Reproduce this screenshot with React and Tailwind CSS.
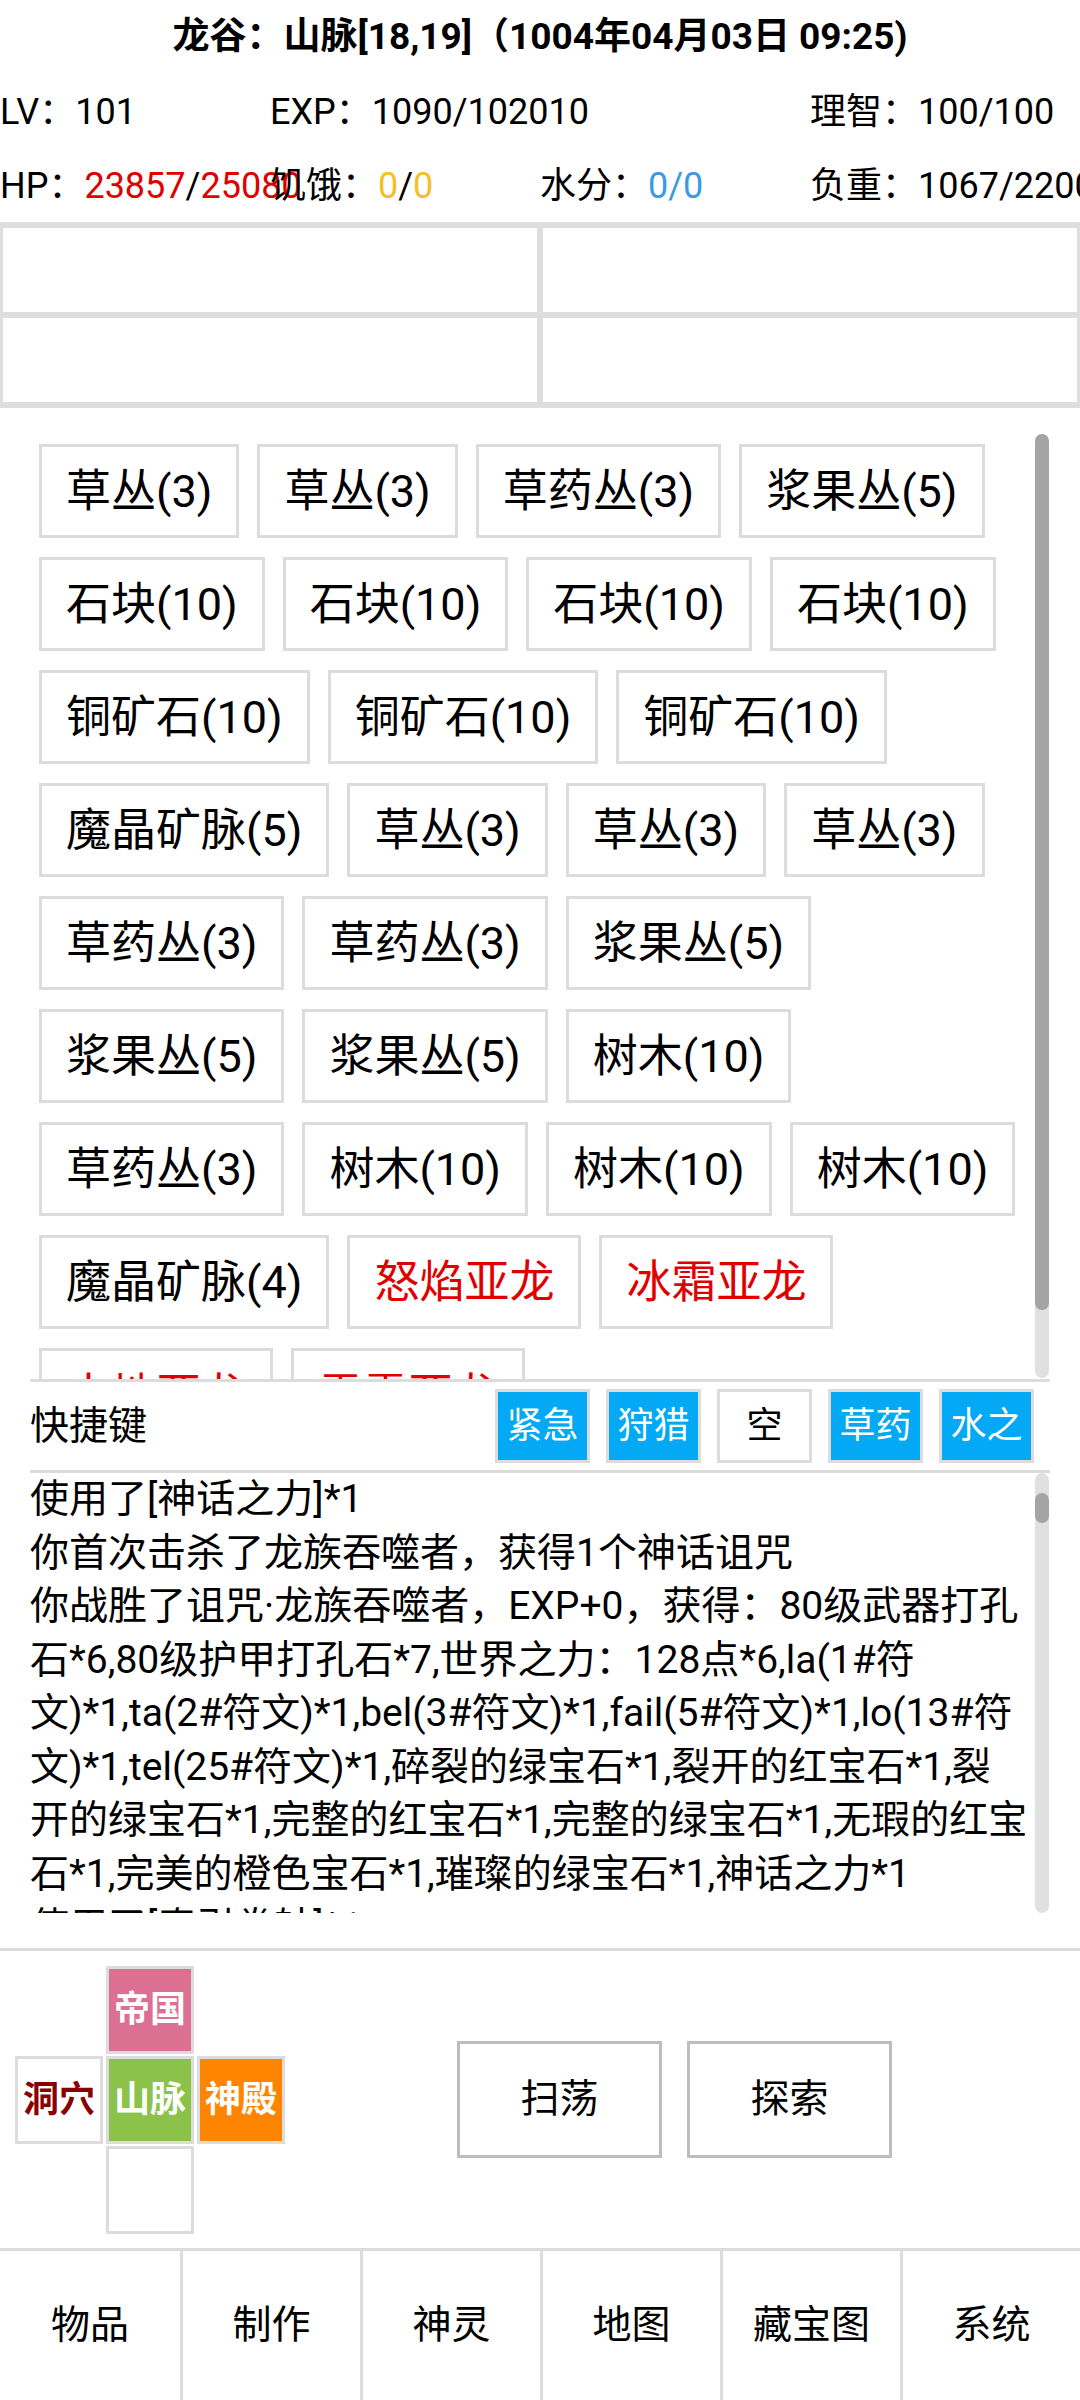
const itemRows = [
  ['草丛(3)', '草丛(3)', '草药丛(3)', '浆果丛(5)'],
  ['石块(10)', '石块(10)', '石块(10)', '石块(10)'],
  ['铜矿石(10)', '铜矿石(10)', '铜矿石(10)'],
  ['魔晶矿脉(5)', '草丛(3)', '草丛(3)', '草丛(3)'],
  ['草药丛(3)', '草药丛(3)', '浆果丛(5)'],
  ['浆果丛(5)', '浆果丛(5)', '树木(10)'],
  ['草药丛(3)', '树木(10)', '树木(10)', '树木(10)'],
  ['魔晶矿脉(4)', '怒焰亚龙', '冰霜亚龙'],
  ['大地亚龙', '雷霆亚龙'],
];

const bosses = ['怒焰亚龙', '冰霜亚龙', '大地亚龙', '雷霆亚龙'];

const shortcuts = [
  { name: '紧急', on: true },
  { name: '狩猎', on: true },
  { name: '空', on: false },
  { name: '草药', on: true },
  { name: '水之', on: true },
];

const logLines = [
  '使用了[神话之力]*1',
  '你首次击杀了龙族吞噬者，获得1个神话诅咒',
  '你战胜了诅咒·龙族吞噬者，EXP+0，获得：80级武器打孔',
  '石*6,80级护甲打孔石*7,世界之力：128点*6,la(1#符',
  '文)*1,ta(2#符文)*1,bel(3#符文)*1,fail(5#符文)*1,lo(13#符',
  '文)*1,tel(25#符文)*1,碎裂的绿宝石*1,裂开的红宝石*1,裂',
  '开的绿宝石*1,完整的红宝石*1,完整的绿宝石*1,无瑕的红宝',
  '石*1,完美的橙色宝石*1,璀璨的绿宝石*1,神话之力*1',
  '使用了[牵引卷轴]*1',
];

const tabs = ['物品', '制作', '神灵', '地图', '藏宝图', '系统'];

function MapCell({ label, className }) {
  return (
    <div className={`border-[3px] border-[#dcdcdc] flex items-center justify-center text-[36px] font-bold leading-none ${className}`}>
      {label}
    </div>
  );
}

export default function App() {
  return (
    <div className="w-[1080px] h-[2400px] overflow-hidden bg-white text-black font-['Roboto','Noto_Sans_CJK_SC',sans-serif] flex flex-col">
      {/* 标题 */}
      <div className="h-[74px] flex items-center justify-center text-[37px] font-bold whitespace-nowrap">
        龙谷：山脉[18,19]（1004年04月03日 09:25)
      </div>

      {/* 属性 */}
      <div className="h-[76px] grid grid-cols-[270px_270px_270px_270px] items-center text-[36px] whitespace-nowrap">
        <div>LV：101</div>
        <div>EXP：1090/102010</div>
        <div></div>
        <div>理智：100/100</div>
      </div>
      <div className="h-[72px] grid grid-cols-[270px_270px_270px_270px] items-center text-[36px] whitespace-nowrap">
        <div>
          HP：<span className="text-[#e00000]">23857</span>/<span className="text-[#e00000]">25080</span>
        </div>
        <div>
          饥饿：<span className="text-[#f4c025]">0</span>/<span className="text-[#f4c025]">0</span>
        </div>
        <div>
          水分：<span className="text-[#3b9ae1]">0/0</span>
        </div>
        <div>负重：1067/2200</div>
      </div>

      {/* 状态格 */}
      <div className="bg-[#dedede] px-[3px] py-[6px] grid grid-cols-2 gap-[6px]">
        <div className="h-[84px] bg-white" />
        <div className="h-[84px] bg-white" />
        <div className="h-[84px] bg-white" />
        <div className="h-[84px] bg-white" />
      </div>

      {/* 场景物品 */}
      <div className="mt-[24px] mx-[30px] h-[950px] border-b-[3px] border-[#dcdcdc] flex">
        <div className="flex-1 overflow-hidden pt-[12px] pl-[9px]">
          {itemRows.map((row, i) => (
            <div key={i} className="flex gap-[18px] mb-[19px]">
              {row.map((name, j) => (
                <div
                  key={j}
                  className={`h-[94px] shrink-0 px-[24px] border-[3px] border-[#dcdcdc] flex items-center text-[45px] leading-none whitespace-nowrap ${bosses.includes(name) ? 'text-[#e00000]' : ''}`}
                >
                  {name}
                </div>
              ))}
            </div>
          ))}
        </div>
        <div className="w-[14px] mt-[2px] mb-[1px] mr-[1px] rounded-full bg-[#e0e0e0]">
          <div className="h-[876px] rounded-full bg-[#a4a4a4]" />
        </div>
      </div>

      {/* 快捷键 */}
      <div className="mx-[30px] h-[91px] border-b-[3px] border-[#dcdcdc] flex items-center justify-between pr-[16px]">
        <div className="text-[39px]">快捷键</div>
        <div className="flex gap-[16px]">
          {shortcuts.map((s, i) => (
            <div
              key={i}
              className={`w-[95px] h-[74px] border-[3px] border-[#dcdcdc] flex items-center justify-center text-[36px] ${s.on ? 'bg-[#03a9f4] text-white' : 'bg-white text-black'}`}
            >
              {s.name}
            </div>
          ))}
        </div>
      </div>

      {/* 日志 */}
      <div className="mx-[30px] h-[440px] mb-[35px] flex">
        <div className="flex-1 overflow-hidden text-[39px] leading-[53.5px] whitespace-nowrap">
          {logLines.map((line, i) => (
            <div key={i}>{line}</div>
          ))}
        </div>
        <div className="w-[14px] mr-[1px] rounded-full bg-[#e0e0e0]">
          <div className="mt-[20px] h-[30px] rounded-full bg-[#a4a4a4]" />
        </div>
      </div>

      {/* 地图 + 行动 */}
      <div className="h-[303px] border-y-[3px] border-[#dcdcdc] flex items-center">
        <div className="ml-[15px] grid grid-cols-[88px_88px_88px] grid-rows-[88px_88px_88px] gap-x-[3px] gap-y-[2px]">
          <div />
          <MapCell label="帝国" className="bg-[#db7093] text-white" />
          <div />
          <MapCell label="洞穴" className="bg-white text-[#8b0000]" />
          <MapCell label="山脉" className="bg-[#8bc34a] text-white" />
          <MapCell label="神殿" className="bg-[#ff8400] text-white" />
          <div />
          <MapCell label="" className="bg-white" />
          <div />
        </div>
        <div className="ml-[172px] flex gap-[25px]">
          <div className="w-[205px] h-[117px] border-[3px] border-[#bdbdbd] flex items-center justify-center text-[39px]">
            扫荡
          </div>
          <div className="w-[205px] h-[117px] border-[3px] border-[#bdbdbd] flex items-center justify-center text-[39px]">
            探索
          </div>
        </div>
      </div>

      {/* 底部导航 */}
      <div className="flex-1 grid grid-cols-6">
        {tabs.map((t, i) => (
          <div
            key={t}
            className={`flex items-center justify-center text-[39px] ${i > 0 ? 'border-l-[3px] border-[#dcdcdc]' : ''}`}
          >
            {t}
          </div>
        ))}
      </div>
    </div>
  );
}
